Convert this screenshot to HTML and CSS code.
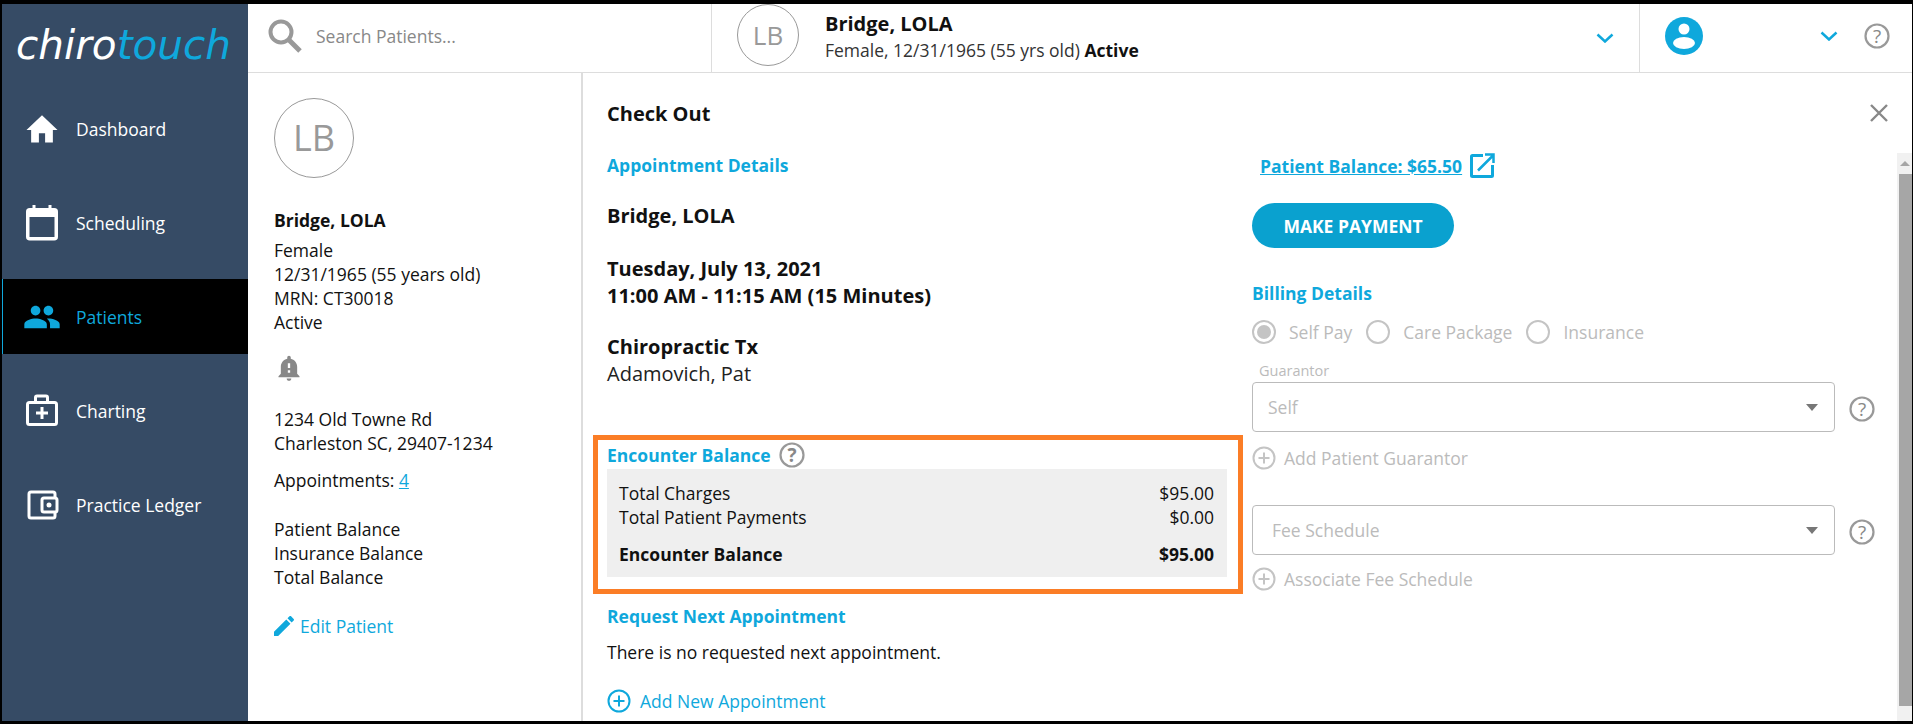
FILE: index.html
```html
<!DOCTYPE html>
<html lang="en">
  <head>
    <meta charset="UTF-8" />
    <meta name="viewport" content="width=device-width, initial-scale=1.0" />
    <title>Check Out</title>
    <link rel="stylesheet" href="styles.css">
  </head>
  <body>
    <div class="app">
      <aside class="sidebar">
        <div class="logo"><span class="logo-white">chiro</span><span class="logo-blue">touch</span></div>
        <nav class="nav">
          <a class="nav-item">
            <svg class="nav-icon" viewBox="0.4 0.2 23.2 23.2" fill="#fff"><path d="M10 20.500v-6h4v6h5v-8h3L12 3 2 12.500h3v8z"/></svg>
            Dashboard
          </a>
          <a class="nav-item">
            <svg class="nav-icon" viewBox="0 0 36 36" fill="none" stroke="#fff" stroke-width="3.500"><rect x="3.750" y="4.750" width="28.500" height="29" rx="2"/><path d="M3 8.500h30" stroke-width="7"/><path d="M10 0v6M26 0v6" stroke-width="3"/></svg>
            Scheduling
          </a>
          <a class="nav-item active">
            <svg class="nav-icon" viewBox="0.8 0.8 22.4 22.4" fill="#0fa8dc"><path d="M16 11c1.660 0 2.990-1.340 2.990-3S17.660 5 16 5c-1.660 0-3 1.340-3 3s1.340 3 3 3zm-8 0c1.660 0 2.990-1.340 2.990-3S9.660 5 8 5C6.340 5 5 6.340 5 8s1.340 3 3 3zm0 2c-2.330 0-7 1.170-7 3.500V19h14v-2.500c0-2.330-4.670-3.500-7-3.500zm8 0c-.290 0-.620.020-.970.050 1.160.840 1.970 1.970 1.970 3.450V19h6v-2.500c0-2.330-4.670-3.500-7-3.500z"/></svg>
            Patients
          </a>
          <a class="nav-item">
            <svg class="nav-icon" viewBox="0 0 36 36" fill="none" stroke="#fff" stroke-width="3"><rect x="3.500" y="9.500" width="29" height="22" rx="2"/><path d="M11.500 9V4.500A1.500 1.500 0 0 1 13 3h9a1.500 1.500 0 0 1 1.500 1.500V9"/><path d="M18 14v12M12 20h12"/></svg>
            Charting
          </a>
          <a class="nav-item">
            <svg class="nav-icon" viewBox="0 0 36 36" fill="none" stroke="#fff" stroke-width="3"><path d="M31 11V7a2 2 0 0 0-2-2H7a2 2 0 0 0-2 2v22a2 2 0 0 0 2 2h22a2 2 0 0 0 2-2v-4"/><rect x="18" y="11" width="15" height="14" rx="2"/><circle cx="25" cy="18" r="2.500" fill="#fff" stroke="none"/></svg>
            Practice Ledger
          </a>
        </nav>
      </aside>

      <div class="content">
        <header class="topbar">
          <div class="search">
            <svg class="search-icon" viewBox="0 0 34 34" fill="none" stroke="#999" stroke-width="4"><circle cx="13" cy="13" r="10.500"/><path d="M20.500 20.500 32 32" stroke-width="5"/></svg>
            <span>Search Patients...</span>
          </div>
          <div class="top-patient">
            <div class="avatar avatar-small">LB</div>
            <div class="top-patient-text">
              <div class="top-name">Bridge, LOLA</div>
              <div>Female, 12/31/1965 (55 yrs old) <b>Active</b></div>
            </div>
            <svg class="chevron" viewBox="0 0 18 10"><path d="M1.500 1.500 9 8.500l7.500-7"/></svg>
          </div>
          <div class="top-user">
            <svg class="user-icon" viewBox="0 0 38 38"><circle cx="19" cy="19" r="19" fill="#0fa8dc"/><circle cx="19" cy="12" r="5.500" fill="#fff"/><ellipse cx="19" cy="26" rx="11" ry="6" fill="#fff"/></svg>
            <svg class="chevron" viewBox="0 0 18 10"><path d="M1.500 1.500 9 8.500l7.500-7"/></svg>
            <svg class="help help-top" viewBox="0 0 26 26"><circle cx="13" cy="13" r="11.500"/><text x="13" y="19.500">?</text></svg>
          </div>
        </header>

        <div class="page">
          <section class="patient-card">
            <div class="avatar avatar-large">LB</div>
            <div class="card-name">Bridge, LOLA</div>
            <div>Female</div>
            <div>12/31/1965 (55 years old)</div>
            <div>MRN: CT30018</div>
            <div>Active</div>
            <svg class="bell" viewBox="0 0 24 24" fill="#888"><path d="M12 23c1.100 0 1.990-.890 1.990-1.990h-3.980c0 1.100.890 1.990 1.990 1.990zm7-6v-6c0-3.350-2.360-6.150-5.500-6.830V3c0-.830-.670-1.500-1.500-1.500s-1.500.670-1.500 1.500v1.170C7.360 4.850 5 7.650 5 11v6l-2 2v1h18v-1l-2-2zm-6-1h-2v-2h2v2zm0-4h-2V8h2v4z"/></svg>
            <div class="card-address">1234 Old Towne Rd</div>
            <div>Charleston SC, 29407-1234</div>
            <div class="card-appts">Appointments: <a class="link">4</a></div>
            <div class="card-balances">Patient Balance</div>
            <div>Insurance Balance</div>
            <div>Total Balance</div>
            <a class="edit-link">
              <svg class="edit-icon" viewBox="3 3 18 18" fill="#0fa8dc"><path d="M3 17.250V21h3.750L17.810 9.940l-3.750-3.750L3 17.250zM20.710 7.040c.390-.390.390-1.020 0-1.410l-2.340-2.340c-.390-.390-1.020-.390-1.410 0l-1.830 1.830 3.750 3.750 1.830-1.830z"/></svg>
              Edit Patient
            </a>
          </section>

          <main class="checkout">
            <div class="col-left">
              <h1 class="title">Check Out</h1>
              <h2 class="heading heading-details">Appointment Details</h2>
              <div class="big big-name">Bridge, LOLA</div>
              <div class="big big-date">Tuesday, July 13, 2021</div>
              <div class="big">11:00 AM - 11:15 AM (15 Minutes)</div>
              <div class="big big-type">Chiropractic Tx</div>
              <div class="provider">Adamovich, Pat</div>

              <section class="encounter">
                <h2 class="heading encounter-head">
                  Encounter Balance
                  <svg class="help" viewBox="0 0 26 26"><circle cx="13" cy="13" r="11.500"/><text x="13" y="19.500">?</text></svg>
                </h2>
                <div class="balance-box">
                  <div class="balance-row"><span>Total Charges</span><span>$95.00</span></div>
                  <div class="balance-row"><span>Total Patient Payments</span><span>$0.00</span></div>
                  <div class="balance-row balance-total"><span>Encounter Balance</span><span>$95.00</span></div>
                </div>
              </section>

              <h2 class="heading heading-request">Request Next Appointment</h2>
              <p class="no-request">There is no requested next appointment.</p>
              <a class="add-row add-appt">
                <svg class="plus-icon" viewBox="0 0 24 24"><circle cx="12" cy="12" r="10.500"/><path d="M12 6.500v11M6.500 12h11"/></svg>
                Add New Appointment
              </a>
            </div>

            <div class="col-right">
              <div class="balance-link">
                <a class="link">Patient Balance: $65.50</a>
                <svg class="open-icon" viewBox="0 0 25 25" fill="none" stroke="#0fa8dc" stroke-width="3"><path d="M13 2.500H2.500a1 1 0 0 0-1 1v19a1 1 0 0 0 1 1h19a1 1 0 0 0 1-1V12"/><path d="M8 17.500 23 2.500M15 1.500h8.500V10" stroke-width="2.500"/></svg>
              </div>
              <button class="pay-btn" type="button">MAKE PAYMENT</button>
              <h2 class="heading heading-billing">Billing Details</h2>

              <div class="radios">
                <span class="radio checked"></span><span class="radio-label">Self Pay</span>
                <span class="radio"></span><span class="radio-label">Care Package</span>
                <span class="radio"></span><span class="radio-label">Insurance</span>
              </div>

              <div class="field-label">Guarantor</div>
              <div class="field-row">
                <div class="select select-self">Self<span class="select-arrow"></span></div>
                <svg class="help help-field" viewBox="0 0 26 26"><circle cx="13" cy="13" r="11.500"/><text x="13" y="19.500">?</text></svg>
              </div>
              <a class="add-row disabled add-guarantor">
                <svg class="plus-icon" viewBox="0 0 24 24"><circle cx="12" cy="12" r="10.500"/><path d="M12 6.500v11M6.500 12h11"/></svg>
                Add Patient Guarantor
              </a>

              <div class="field-row fee-row">
                <div class="select select-fee">Fee Schedule<span class="select-arrow"></span></div>
                <svg class="help help-field" viewBox="0 0 26 26"><circle cx="13" cy="13" r="11.500"/><text x="13" y="19.500">?</text></svg>
              </div>
              <a class="add-row disabled add-fee">
                <svg class="plus-icon" viewBox="0 0 24 24"><circle cx="12" cy="12" r="10.500"/><path d="M12 6.500v11M6.500 12h11"/></svg>
                Associate Fee Schedule
              </a>
            </div>

            <button class="close-btn" type="button" aria-label="Close">
              <svg viewBox="0 0 18 18" fill="none" stroke="#888" stroke-width="2.400"><path d="M1 1l16 16M17 1 1 17"/></svg>
            </button>
            <div class="scrollbar">
              <div class="scroll-up"></div>
              <div class="scroll-thumb"></div>
              <div class="scroll-down"></div>
            </div>
          </main>
        </div>
      </div>
    </div>
  </body>
</html>
```

FILE: styles.css
```css
/* General */
* {
  box-sizing: border-box;
}

html,
body {
  height: 100%;
}

body {
  margin: 0;
  background-color: #000;
  color: #111;
  font-family: "Open Sans", Arial, sans-serif;
  font-size: 17.5px;
  line-height: 24px;
  overflow: hidden;
}

.app {
  display: flex;
  height: 724px;
  padding: 4px 1px 3px 2px;
}

/* Sidebar */
.sidebar {
  width: 246px;
  flex: none;
  background-color: #364b65;
}

.logo {
  height: 87px;
  padding: 17px 0 0 14px;
  font-family: "DejaVu Sans", Arial, sans-serif;
  font-size: 40.5px;
  font-style: italic;
  line-height: 48px;
  white-space: nowrap;
}

.logo-white {
  color: #fff;
}

.logo-blue {
  color: #0fa8dc;
}

.nav {
  display: flex;
  flex-direction: column;
  gap: 19px;
}

.nav-item {
  display: flex;
  align-items: center;
  height: 75px;
  padding-left: 22px;
  color: #fff;
  font-size: 17.5px;
}

.nav-item.active {
  background-color: #000;
  border-left: 1px solid #0fa8dc;
  padding-left: 21px;
  color: #0fa8dc;
}

.nav-icon {
  width: 36px;
  height: 36px;
  margin-right: 16px;
  flex: none;
}

/* Top bar */
.content {
  flex: 1;
  display: flex;
  flex-direction: column;
  min-width: 0;
  background-color: #fff;
}

.topbar {
  display: flex;
  height: 69px;
  flex: none;
  border-bottom: 1px solid #ddd;
}

.search {
  display: flex;
  align-items: center;
  width: 463px;
  padding: 0 0 5px 20px;
  color: #888;
}

.search-icon {
  width: 34px;
  height: 34px;
  margin-right: 14px;
}

.top-patient {
  display: flex;
  align-items: center;
  width: 928px;
  padding: 0 25px 0 25px;
  border-left: 1px solid #ddd;
  color: #333;
}

.top-patient-text {
  flex: 1;
  margin-left: 26px;
  padding-bottom: 2px;
  line-height: 26px;
}

.top-name {
  color: #111;
  font-size: 20px;
  font-weight: 700;
}

.top-patient b {
  color: #111;
}

.top-user {
  flex: 1;
  display: flex;
  align-items: center;
  padding: 0 22px 4px 25px;
  border-left: 1px solid #ddd;
}

.user-icon {
  width: 38px;
  height: 38px;
  margin-right: 117px;
}

.chevron {
  width: 18px;
  height: 10px;
  fill: none;
  stroke: #0fa8dc;
  stroke-width: 2.5;
}

.help {
  width: 26px;
  height: 26px;
  flex: none;
  fill: none;
  stroke: #999;
  stroke-width: 2.2;
}

.help text {
  fill: #888;
  stroke: none;
  font-size: 19px;
  text-anchor: middle;
}

.help-top {
  margin-left: 26px;
}

/* Avatars */
.avatar {
  display: flex;
  align-items: center;
  justify-content: center;
  flex: none;
  border: 1px solid #999;
  border-radius: 50%;
  color: #999;
}

.avatar-small {
  width: 62px;
  height: 62px;
  margin-top: -6px;
  font-size: 26px;
}

.avatar-large {
  width: 80px;
  height: 80px;
  margin-bottom: 30px;
  font-size: 36px;
}

/* Patient card */
.page {
  flex: 1;
  display: flex;
  min-height: 0;
}

.patient-card {
  width: 335px;
  flex: none;
  padding: 25px 0 0 26px;
  border-right: 2px solid #ddd;
}

.card-name {
  margin-bottom: 6px;
  font-weight: 700;
}

.bell {
  display: block;
  width: 28px;
  height: 28px;
  margin: 20px 0 0 1px;
}

.card-address {
  margin-top: 25px;
}

.card-appts {
  margin-top: 13px;
}

.card-balances {
  margin-top: 25px;
}

.link {
  color: #0fa8dc;
  text-decoration: underline;
}

.edit-link {
  display: flex;
  align-items: center;
  margin-top: 25px;
  color: #0fa8dc;
}

.edit-icon {
  width: 20px;
  height: 20px;
  margin-right: 6px;
}

/* Check out */
.checkout {
  position: relative;
  flex: 1;
  display: grid;
  grid-template-columns: 660px 1fr;
  min-width: 0;
  overflow: hidden;
}

.col-left {
  padding-top: 29px;
}

.col-left > .title,
.col-left > .heading,
.col-left > .big,
.col-left > .provider,
.col-left > .no-request,
.col-left > .add-row {
  margin-left: 24px;
}

.title {
  margin: 0;
  font-size: 20px;
  font-weight: 700;
  line-height: 24px;
  color: #111;
}

.heading {
  margin: 0;
  color: #0fa8dc;
  font-size: 17.5px;
  font-weight: 700;
  line-height: 24px;
}

.heading-details {
  margin-top: 27px;
}

.big {
  font-size: 20px;
  font-weight: 700;
  line-height: 27px;
  color: #111;
}

.big-name {
  margin-top: 25px;
}

.big-date {
  margin-top: 26px;
}

.big-type {
  margin-top: 24px;
}

.provider {
  font-size: 20px;
  line-height: 27px;
  color: #222;
}

/* Encounter balance, boxed in orange */
.encounter {
  width: 650px;
  height: 159px;
  margin: 48px 0 0 10px;
  padding: 2px 11px 0 9px;
  border: 5px solid #fb7d26;
}

.encounter-head {
  display: flex;
  align-items: center;
  gap: 8px;
}

.balance-box {
  margin-top: 1px;
  padding: 12px 13px 11px 12px;
  background-color: #efefef;
}

.balance-row {
  display: flex;
  justify-content: space-between;
}

.balance-total {
  margin-top: 13px;
  font-weight: 700;
}

.heading-request {
  margin-top: 10px;
}

.no-request {
  margin: 12px 0 0 0;
}

.add-row {
  display: flex;
  align-items: center;
  height: 24px;
  color: #0fa8dc;
}

.add-appt {
  margin-top: 25px;
}

.plus-icon {
  width: 24px;
  height: 24px;
  margin-right: 8px;
  fill: none;
  stroke: #0fa8dc;
  stroke-width: 2;
}

.add-appt .plus-icon {
  margin-right: 9px;
}

.disabled {
  color: #bbb;
}

.disabled .plus-icon {
  stroke: #c4c4c4;
}

/* Right column */
.col-right {
  padding: 80px 0 0 9px;
}

.balance-link {
  display: flex;
  align-items: center;
  gap: 8px;
  margin-left: 8px;
  font-weight: 700;
}

.open-icon {
  width: 25px;
  height: 25px;
}

.pay-btn {
  display: block;
  width: 202px;
  height: 45px;
  margin-top: 25px;
  border: none;
  border-radius: 23px;
  background-color: #0aa1cf;
  color: #fff;
  font-family: inherit;
  font-size: 17.5px;
  font-weight: 700;
}

.heading-billing {
  margin-top: 33px;
}

.radios {
  display: flex;
  align-items: center;
  height: 24px;
  margin-top: 15px;
  color: #bbb;
}

.radio {
  display: flex;
  align-items: center;
  justify-content: center;
  width: 24px;
  height: 24px;
  border: 2px solid #c4c4c4;
  border-radius: 50%;
}

.radio.checked::after {
  content: "";
  width: 14px;
  height: 14px;
  border-radius: 50%;
  background-color: #c4c4c4;
}

.radio-label {
  margin: 0 14px 0 13px;
}

.field-label {
  margin: 18px 0 0 7px;
  color: #bbb;
  font-size: 14.5px;
  line-height: 18px;
}

.field-row {
  display: flex;
  align-items: center;
  gap: 14px;
  margin-top: 2px;
}

.select {
  position: relative;
  display: flex;
  align-items: center;
  width: 583px;
  height: 50px;
  border: 1px solid #bbb;
  border-radius: 4px;
  color: #bbb;
}

.select-self {
  padding-left: 15px;
}

.select-fee {
  padding-left: 19px;
}

.select-arrow {
  position: absolute;
  right: 16px;
  top: 21px;
  border-left: 6px solid transparent;
  border-right: 6px solid transparent;
  border-top: 7px solid #777;
}

.help-field {
  margin-top: 3px;
}

.add-guarantor {
  margin-top: 14px;
}

.fee-row {
  margin-top: 35px;
}

.add-fee {
  margin-top: 12px;
}

/* Close button and scrollbar sit over the panel */
.close-btn {
  position: absolute;
  top: 31px;
  right: 24px;
  width: 18px;
  height: 18px;
  padding: 0;
  border: none;
  background: none;
}

.close-btn svg {
  display: block;
}

.scrollbar {
  position: absolute;
  top: 80px;
  right: 0;
  bottom: 0;
  display: flex;
  flex-direction: column;
  width: 15px;
  padding-left: 2px;
  background-color: #f1f1f1;
}

.scroll-up {
  position: relative;
  height: 21px;
}

.scroll-up::after {
  content: "";
  position: absolute;
  left: 1px;
  top: 8px;
  border-left: 5px solid transparent;
  border-right: 5px solid transparent;
  border-bottom: 5px solid #a6a6a6;
}

.scroll-thumb {
  flex: 1;
  background-color: #a6a6a6;
}

.scroll-down {
  height: 15px;
}
```
